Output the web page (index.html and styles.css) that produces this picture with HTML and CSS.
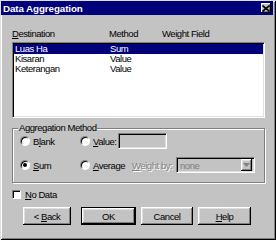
FILE: index.html
```html
<!DOCTYPE html>
<html lang="en">

<head>
  <meta charset="UTF-8">
  <title>Data Aggregation</title>
  <link rel="stylesheet" href="styles.css">
</head>

<body>
  <div class="window">
    <div class="titlebar">
      <span class="title">Data Aggregation</span>
      <span class="close">
        <svg width="8" height="7" viewBox="0 0 8 7"><path d="M0.5 0.5 L7.5 6.5 M7.5 0.5 L0.5 6.5" stroke="#000" stroke-width="1.6"/></svg>
      </span>
    </div>

    <div class="main">
      <div class="headers">
        <span><u>D</u>estination</span>
        <span>Method</span>
        <span>Weight Field</span>
      </div>

      <div class="listbox">
        <div class="row selected"><span>Luas Ha</span><span>Sum</span><span></span></div>
        <div class="row"><span>Kisaran</span><span>Value</span><span></span></div>
        <div class="row"><span>Keterangan</span><span>Value</span><span></span></div>
      </div>

      <div class="group">
        <div class="group-label">Aggregation Method</div>
        <div class="opts">
          <label class="opt first"><span class="radio"></span><span>B<u>l</u>ank</span></label>
          <label class="opt second"><span class="radio"></span><span><u>V</u>alue:</span></label>
          <span class="edit"></span>
        </div>
        <div class="opts">
          <label class="opt first"><span class="radio on"></span><span><u>S</u>um</span></label>
          <label class="opt second wide"><span class="radio"></span><span><u>A</u>verage</span></label>
          <span class="disabled weight"><u>W</u>eight by:</span>
          <span class="combo"><span class="combo-text">none</span><span class="combo-btn">
            <svg width="7" height="5" viewBox="0 0 7 5"><path d="M0 0 H7 L3.5 4 Z" fill="#808080"/></svg>
          </span></span>
        </div>
      </div>

      <label class="check-row"><span class="check"></span><span><u>N</u>o Data</span></label>

      <div class="buttons">
        <button class="btn back">&lt; <u>B</u>ack</button>
        <button class="btn ok">OK</button>
        <button class="btn cancel">Cancel</button>
        <button class="btn help"><u>H</u>elp</button>
      </div>
    </div>
  </div>
</body>

</html>
```

FILE: styles.css
```css
body {
  margin: 0;
  padding: 0;
  font-family: "Liberation Sans", Arial, sans-serif;
  font-size: 9.5px;
  letter-spacing: -0.45px;
  color: #000;
}

.window {
  width: 276px;
  height: 240px;
  box-sizing: border-box;
  background: #c3c3c3;
  box-shadow: inset 1px 1px #dfdfdf, inset -1px -1px #000, inset 2px 2px #fff, inset -2px -2px #808080;
  padding-top: 1px;
}

.titlebar {
  height: 14px;
  margin: 0 3px 0 1px;
  padding: 0 2px 0 2px;
  background: #00007b;
  color: #fff;
  display: flex;
  align-items: center;
  justify-content: space-between;
}

.title {
  font-weight: bold;
  font-size: 9.8px;
  letter-spacing: -0.1px;
}

.close {
  width: 10px;
  height: 10px;
  background: #c3c3c3;
  box-shadow: inset -1px -1px #000, inset 1px 1px #fff, inset -2px -2px #808080;
  display: flex;
  align-items: center;
  justify-content: center;
}

.main {
  padding: 13px 11px 0 12px;
}

.headers {
  display: grid;
  grid-template-columns: 97px 53px auto;
  height: 11px;
  line-height: 11px;
}

.listbox {
  margin-top: 3px;
  height: 76px;
  box-sizing: border-box;
  background: #fff;
  padding: 1px 1px 0 1px;
  border: 1px solid;
  border-color: #808080 #fff #fff #808080;
  box-shadow: inset 1px 1px #000, inset -1px -1px #dfdfdf;
}

.row {
  display: grid;
  grid-template-columns: 95px 53px auto;
  height: 10px;
  line-height: 10px;
}

.row span {
  padding-left: 1px;
}

.row.selected {
  background: #00007b;
  color: #fff;
}

.group {
  margin-top: 10px;
  height: 55px;
  box-sizing: border-box;
  border: 1px solid #808080;
  box-shadow: inset 1px 1px #fff, 1px 1px #fff;
  padding: 0 0 0 7px;
}

.group-label {
  display: table;
  margin: -7px 0 0 -2px;
  padding: 0 1px;
  height: 11px;
  line-height: 11px;
  background: #c3c3c3;
}

.opts {
  display: flex;
  align-items: center;
  height: 16px;
}

.opts + .opts {
  margin-top: 8px;
}

.opt {
  display: flex;
  align-items: center;
  gap: 3px;
}

.opt.first {
  width: 60px;
}

.opt.second {
  width: 38px;
}

.opt.second.wide {
  width: 52px;
}

.radio {
  width: 8px;
  height: 8px;
  border-radius: 50%;
  background: #fff;
  border: 1px solid;
  border-color: #808080 #fff #fff #808080;
  box-shadow: inset 1px 1px #000;
  display: flex;
  align-items: center;
  justify-content: center;
}

.radio.on::after {
  content: "";
  width: 4px;
  height: 4px;
  border-radius: 50%;
  background: #000;
}

.edit {
  width: 49px;
  height: 16px;
  box-sizing: border-box;
  border: 1px solid;
  border-color: #808080 #fff #fff #808080;
  box-shadow: inset 1px 1px #000, inset -1px -1px #dfdfdf;
}

.disabled {
  color: #808080;
  text-shadow: 1px 1px #fff;
}

.weight {
  width: 44px;
}

.combo {
  width: 79px;
  height: 16px;
  box-sizing: border-box;
  border: 1px solid;
  border-color: #808080 #fff #fff #808080;
  box-shadow: inset 1px 1px #000, inset -1px -1px #dfdfdf;
  display: flex;
  align-items: center;
  padding: 2px 2px 2px 3px;
}

.combo-text {
  flex: 1;
  color: #808080;
}

.combo-btn {
  width: 11px;
  height: 12px;
  box-sizing: border-box;
  box-shadow: inset -1px -1px #000, inset 1px 1px #fff, inset -2px -2px #808080, inset 2px 2px #dfdfdf;
  display: flex;
  align-items: center;
  justify-content: center;
}

.check-row {
  display: flex;
  align-items: center;
  gap: 4px;
  height: 11px;
  margin-top: 6px;
}

.check {
  width: 7px;
  height: 7px;
  background: #fff;
  border: 1px solid;
  border-color: #808080 #fff #fff #808080;
  box-shadow: inset 1px 1px #000;
}

.buttons {
  display: flex;
  margin-top: 7px;
  padding-left: 11px;
}

.btn {
  height: 18px;
  padding: 0;
  border: none;
  background: #c3c3c3;
  font-family: inherit;
  font-size: 9.5px;
  letter-spacing: -0.45px;
  color: #000;
  box-shadow: inset -1px -1px #000, inset 1px 1px #fff, inset -2px -2px #808080, inset 2px 2px #dfdfdf;
}

.back {
  width: 48px;
}

.ok {
  width: 55px;
  margin-left: 10px;
  border: 1px solid #000;
}

.cancel {
  width: 52px;
  margin-left: 5px;
}

.help {
  width: 53px;
  margin-left: 5px;
}
```
